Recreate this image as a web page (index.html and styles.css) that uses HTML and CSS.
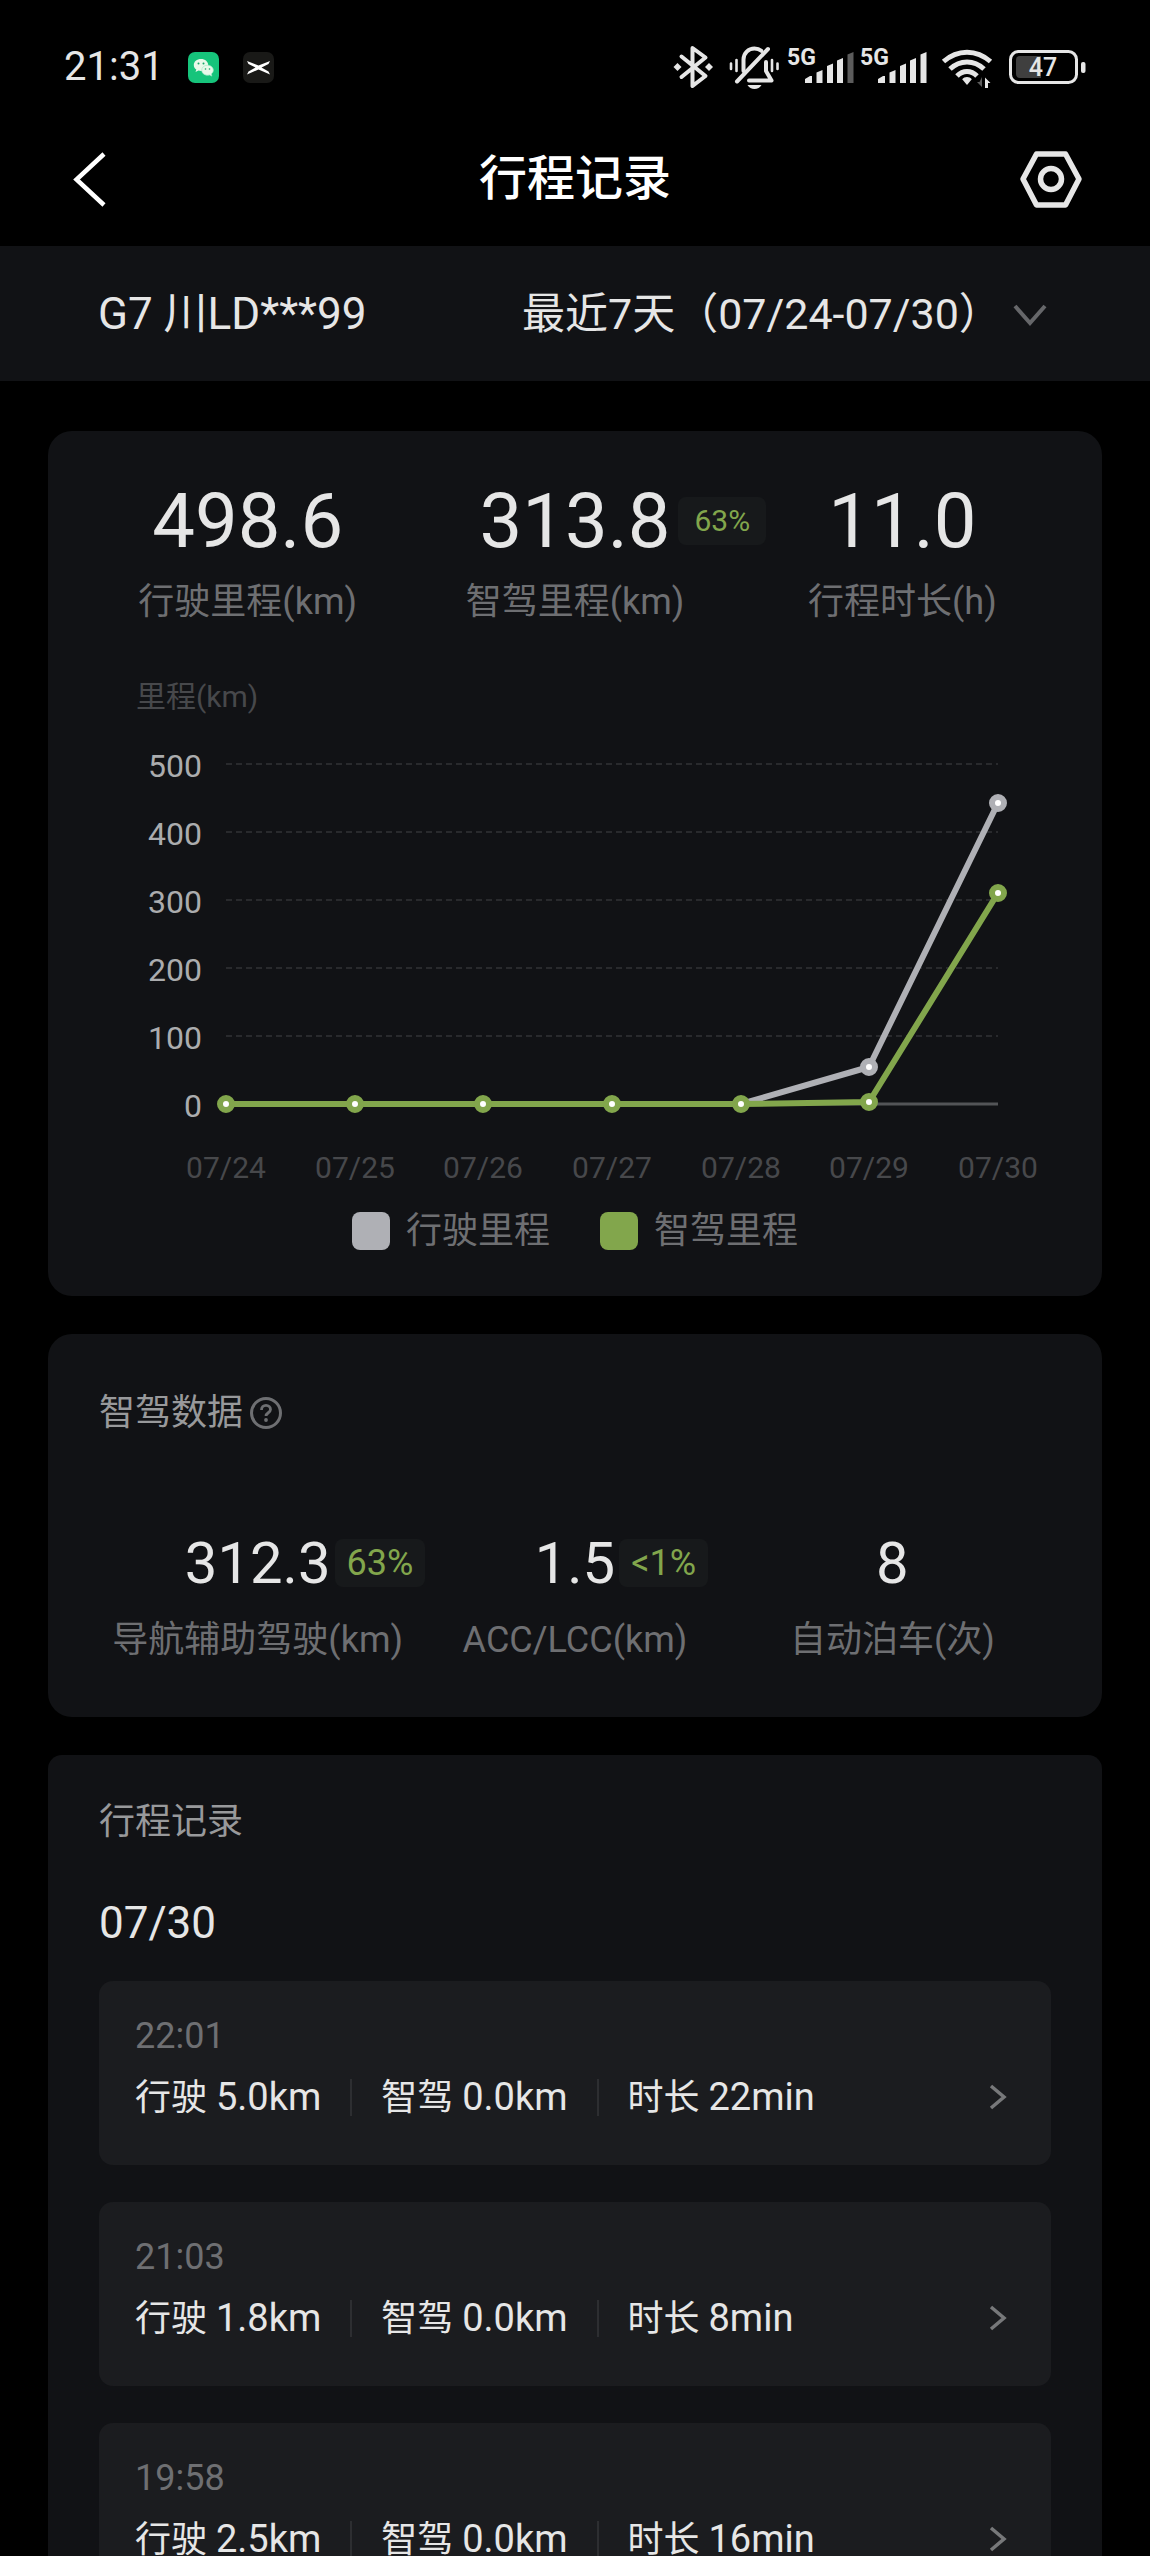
FILE: index.html
```html
<!DOCTYPE html>
<html lang="zh-CN">
<head>
<meta charset="utf-8">
<meta name="viewport" content="width=device-width, initial-scale=1">
<title>行程记录</title>
<link rel="stylesheet" href="styles.css">
</head>
<body>
<div class="app">
  <div class="status-bar">
    <div class="status-left">
      <time class="clock">21:31</time>
      <svg class="app-icon" viewBox="0 0 31 31" role="img" aria-label="微信">
        <rect width="31" height="31" rx="7" fill="#16c47b"/>
        <path d="M13 7c-4.200 0-7.200 2.600-7.200 6 0 2 1 3.500 2.500 4.600L7.500 20l3-1.400c.8.200 1.600.4 2.500.4 4.200 0 7.200-2.700 7.200-6S17.200 7 13 7z" fill="#e9f9ea"/>
        <path d="M19.500 13.200c-3.300 0-5.800 2.200-5.800 5s2.500 5 5.800 5c.7 0 1.400-.1 2-.3l2.300 1.200-.5-2.200c1.300-1 2-2.300 2-3.700 0-2.800-2.500-5-5.800-5z" fill="#e9f9ea" stroke="#a5e9c9" stroke-width=".7"/>
        <g fill="#16a868"><circle cx="10.500" cy="11.500" r="1"/><circle cx="15.500" cy="11.500" r="1"/><circle cx="17.500" cy="17" r=".8"/><circle cx="21.500" cy="17" r=".8"/></g>
      </svg>
      <svg class="app-icon" viewBox="0 0 31 31" role="img" aria-label="小鹏汽车">
        <rect width="31" height="31" rx="7" fill="#191917"/>
        <path d="M4 9l11.500 4.600L27 9l-1.500 3-7 3.500 7 4 1.500 3-11.500-5L4 22.500l1.500-3 7-4-7-3.500z" fill="#fff"/>
      </svg>
    </div>
    <div class="status-right">
      <svg width="56" height="48" viewBox="0 0 56 48" role="img" aria-label="蓝牙">
        <path d="M11.500 13.500L35.500 33 22.500 43V5l13 9.500L11.500 34" fill="none" stroke="#e6e6e6" stroke-width="4" stroke-linejoin="round" stroke-linecap="round"/>
        <path d="M7.500 20l4 4-4 4-4-4zM39 20l4 4-4 4-4-4z" fill="#e6e6e6"/>
      </svg>
      <svg width="60" height="48" viewBox="0 0 60 48" role="img" aria-label="静音振动">
        <g fill="none" stroke="#e6e6e6" stroke-linecap="round" stroke-linejoin="round">
          <path d="M17.500 28V16.500c0-6.500 5-11 11-11 2.600 0 5 .8 6.800 2.300" stroke-width="4"/>
          <path d="M40 19v9l5.500 9.500H23" stroke-width="4"/>
          <path d="M42 6L11 38.500" stroke-width="4"/>
          <path d="M5 20.500v5.500M10.500 17v11M46 17v11M51.500 20.500v5.500" stroke-width="2.600"/>
        </g>
        <path d="M21.500 42h14c-1.500 2.500-4 4-7 4s-5.500-1.500-7-4z" fill="#e6e6e6"/>
      </svg>
      <svg width="73" height="48" viewBox="0 0 73 48" role="img" aria-label="5G 信号四格">
        <text class="net-type" x="1" y="22">5G</text>
        <path d="M19 40v-4l5-3h2v7zM30.500 40V29.500l6-2.500v13zM41 40V23l6-2.500V40zM51 40V17.500l6-2.500v25z" fill="#e6e6e6"/>
        <path d="M61.500 40V11.500l6-2.500v31z" fill="#5c5c5c"/>
      </svg>
      <svg width="73" height="48" viewBox="0 0 73 48" role="img" aria-label="5G 信号满格">
        <text class="net-type" x="1" y="22">5G</text>
        <path d="M19 40v-4l5-3h2v7zM30.500 40V29.500l6-2.500v13zM41 40V23l6-2.500V40zM51 40V17.500l6-2.500v25zM61.500 40V11.500l6-2.500v31z" fill="#e6e6e6"/>
      </svg>
      <svg width="70" height="48" viewBox="0 0 70 48" role="img" aria-label="无线网络">
        <g fill="none" stroke="#e6e6e6" stroke-width="5">
          <path d="M11.500 18.500c14-12.500 33-12.500 47 0"/>
          <path d="M18 26c10-9.500 24-9.500 34 0"/>
          <path d="M25 33c6-6 14-6 20 0"/>
        </g>
        <path d="M35 34c2 0 3.600.8 4.800 2.200L35 42l-4.800-5.800C31.400 34.800 33 34 35 34z" fill="#e6e6e6"/>
        <path d="M50 34v10l-5-5h2.500" fill="#5c5c5c"/>
        <path d="M53 45V34.500l5.500 5.500H56v5z" fill="#e6e6e6"/>
      </svg>
      <svg width="88" height="48" viewBox="0 0 88 48" role="img" aria-label="电量">
        <rect x="8.500" y="8.500" width="66" height="31" rx="8" fill="none" stroke="#e6e6e6" stroke-width="3"/>
        <path d="M18 13h21v22H18a4 4 0 0 1-4-4V17a4 4 0 0 1 4-4z" fill="#3f3f3f"/>
        <rect x="79" y="19" width="4.500" height="11" rx="2" fill="#e6e6e6"/>
        <text class="battery-level" x="41" y="33" text-anchor="middle">47</text>
      </svg>
    </div>
  </div>

  <header class="nav-bar">
    <button class="icon-button" type="button" aria-label="返回">
      <svg width="64" height="64" viewBox="0 0 64 64"><path d="M37 7L9.500 32.500 37 58" fill="none" stroke="#fff" stroke-width="4.500"/></svg>
    </button>
    <h1 class="nav-title">行程记录</h1>
    <button class="icon-button" type="button" aria-label="设置">
      <svg width="64" height="64" viewBox="0 0 64 64"><g fill="none" stroke="#e6e6e6"><path d="M17.500 7h29L60 32 46.500 58h-29L4 32z" stroke-width="5.500" stroke-linejoin="round"/><circle cx="32" cy="32" r="10.500" stroke-width="5.500"/></g></svg>
    </button>
  </header>

  <div class="filter-bar">
    <span class="vehicle">G7 川LD***99</span>
    <label class="range">
      <select class="range-select" aria-label="时间范围">
        <option>最近7天（07/24-07/30）</option>
      </select>
      <svg class="range-arrow" width="36" height="28" viewBox="0 0 36 28"><path d="M3 4l15 17L33 4" fill="none" stroke="#66676a" stroke-width="4"/></svg>
    </label>
  </div>

  <main class="content">
    <section class="card summary">
      <dl class="stats stats-large">
        <div class="stat">
          <dd class="value"><span class="number">498.6</span></dd>
          <dt class="stat-label">行驶里程(km)</dt>
        </div>
        <div class="stat">
          <dd class="value"><span class="number">313.8<span class="badge">63%</span></span></dd>
          <dt class="stat-label">智驾里程(km)</dt>
        </div>
        <div class="stat">
          <dd class="value"><span class="number">11.0</span></dd>
          <dt class="stat-label">行程时长(h)</dt>
        </div>
      </dl>
      <p class="axis-title">里程(km)</p>
      <svg class="chart" viewBox="0 0 1054 480" role="img" aria-label="每日里程折线图">
        <path class="grid-line" d="M178 47h772M178 115h772M178 183h772M178 251h772M178 319h772"/>
        <path class="base-line" d="M178 387h772"/>
        <g class="y-labels">
          <text x="154" y="60">500</text>
          <text x="154" y="128">400</text>
          <text x="154" y="196">300</text>
          <text x="154" y="264">200</text>
          <text x="154" y="332">100</text>
          <text x="154" y="400">0</text>
        </g>
        <g class="x-labels">
          <text x="178" y="461">07/24</text>
          <text x="307" y="461">07/25</text>
          <text x="435" y="461">07/26</text>
          <text x="564" y="461">07/27</text>
          <text x="693" y="461">07/28</text>
          <text x="821" y="461">07/29</text>
          <text x="950" y="461">07/30</text>
        </g>
        <g class="series total">
          <path d="M178 387H693L821 350 950 86"/>
          <circle cx="821" cy="350" r="6"/><circle cx="950" cy="86" r="6"/>
        </g>
        <g class="series assisted">
          <path d="M178 387H693L821 385 950 176"/>
          <circle cx="178" cy="387" r="6"/><circle cx="307" cy="387" r="6"/><circle cx="435" cy="387" r="6"/><circle cx="564" cy="387" r="6"/><circle cx="693" cy="387" r="6"/><circle cx="821" cy="385" r="6"/><circle cx="950" cy="176" r="6"/>
        </g>
      </svg>
      <ul class="legend">
        <li class="legend-item"><span class="swatch swatch-total"></span>行驶里程</li>
        <li class="legend-item"><span class="swatch swatch-assisted"></span>智驾里程</li>
      </ul>
    </section>

    <section class="card assist">
      <h2 class="card-title">智驾数据
        <button class="help" type="button" aria-label="说明">
          <svg width="34" height="34" viewBox="0 0 34 34"><circle cx="17" cy="17" r="14.500" fill="none" stroke="#6e6f72" stroke-width="3"/><path d="M12.500 14c0-3 2-4.700 4.500-4.700s4.500 1.700 4.500 4.200c0 3.200-4.500 3.300-4.500 6.500" fill="none" stroke="#6e6f72" stroke-width="2.800"/><circle cx="17" cy="24" r="1.900" fill="#6e6f72"/></svg>
        </button>
      </h2>
      <dl class="stats stats-small">
        <div class="stat">
          <dd class="value"><span class="number">312.3<span class="badge">63%</span></span></dd>
          <dt class="stat-label">导航辅助驾驶(km)</dt>
        </div>
        <div class="stat">
          <dd class="value"><span class="number">1.5<span class="badge">&lt;1%</span></span></dd>
          <dt class="stat-label">ACC/LCC(km)</dt>
        </div>
        <div class="stat">
          <dd class="value"><span class="number">8</span></dd>
          <dt class="stat-label">自动泊车(次)</dt>
        </div>
      </dl>
    </section>

    <section class="card history">
      <h2 class="card-title">行程记录</h2>
      <h3 class="date">07/30</h3>
      <ul class="trips">
        <li><a class="trip" href="#trip-2201">
          <time class="trip-time">22:01</time>
          <span class="trip-row">
            <span class="trip-field">行驶 <span class="trip-value">5.0km</span></span><span class="trip-field">智驾 <span class="trip-value">0.0km</span></span><span class="trip-field">时长 <span class="trip-value">22min</span></span>
            <svg class="trip-arrow" width="20" height="28" viewBox="0 0 20 28"><path d="M3 3l13 11L3 25" fill="none" stroke="#77787a" stroke-width="3.500"/></svg>
          </span>
        </a></li>
        <li><a class="trip" href="#trip-2103">
          <time class="trip-time">21:03</time>
          <span class="trip-row">
            <span class="trip-field">行驶 <span class="trip-value">1.8km</span></span><span class="trip-field">智驾 <span class="trip-value">0.0km</span></span><span class="trip-field">时长 <span class="trip-value">8min</span></span>
            <svg class="trip-arrow" width="20" height="28" viewBox="0 0 20 28"><path d="M3 3l13 11L3 25" fill="none" stroke="#77787a" stroke-width="3.500"/></svg>
          </span>
        </a></li>
        <li><a class="trip" href="#trip-1958">
          <time class="trip-time">19:58</time>
          <span class="trip-row">
            <span class="trip-field">行驶 <span class="trip-value">2.5km</span></span><span class="trip-field">智驾 <span class="trip-value">0.0km</span></span><span class="trip-field">时长 <span class="trip-value">16min</span></span>
            <svg class="trip-arrow" width="20" height="28" viewBox="0 0 20 28"><path d="M3 3l13 11L3 25" fill="none" stroke="#77787a" stroke-width="3.500"/></svg>
          </span>
        </a></li>
      </ul>
    </section>
  </main>
</div>
</body>
</html>
```
FILE: styles.css
```css
:root {
  --text: #e6e6e6;
  --text-mid: #98999b;
  --text-dim: #6e6f72;
  --text-faint: #47484b;
  --green: #82a64c;
  --silver: #afb0b5;
  --card: #111215;
  --card-inner: #1b1c1f;
}

* {
  box-sizing: border-box;
}

body,
h1,
h2,
h3,
p,
dl,
dd,
ul {
  margin: 0;
  padding: 0;
}

ul {
  list-style: none;
}

body {
  background: #000;
  color: var(--text);
  font-family: Roboto, "Noto Sans CJK SC", sans-serif;
  font-size: 36px;
  line-height: 50px;
}

button {
  padding: 0;
  border: 0;
  background: none;
  font: inherit;
  color: inherit;
}

svg {
  display: block;
}

.app {
  display: flex;
  flex-direction: column;
  height: 100vh;
}

/* Phone status bar */
.status-bar {
  display: flex;
  flex: none;
  justify-content: space-between;
  align-items: center;
  padding: 22px 60px 0 64px;
  height: 112px;
}

.status-left {
  display: flex;
  align-items: center;
  gap: 24px;
}

.clock {
  font-size: 40px;
}

.app-icon {
  width: 31px;
  height: 31px;
}

.status-right {
  display: flex;
}

.net-type {
  fill: var(--text);
  font-size: 23px;
  font-weight: 700;
}

.battery-level {
  fill: var(--text);
  font-size: 25px;
  font-weight: 500;
}

/* Title bar */
.nav-bar {
  display: flex;
  flex: none;
  justify-content: space-between;
  align-items: center;
  padding: 0 67px;
  height: 134px;
}

.nav-title {
  font-size: 48px;
  font-weight: 500;
  line-height: 60px;
  color: #fff;
}

/* Vehicle and date range */
.filter-bar {
  display: flex;
  flex: none;
  justify-content: space-between;
  align-items: center;
  padding: 0 102px 0 98px;
  height: 135px;
  background: var(--card);
  font-size: 44px;
  line-height: 60px;
}

.range {
  position: relative;
  font-size: 43px;
}

.range-select {
  display: block;
  margin: 0;
  padding: 0 46px 0 0;
  border: 0;
  appearance: none;
  background: none;
  color: inherit;
  font: inherit;
}

.range-arrow {
  position: absolute;
  top: 18px;
  right: 0;
  pointer-events: none;
}

/* Scrolling content */
.content {
  display: flex;
  flex: 1;
  flex-direction: column;
  gap: 38px;
  min-height: 0;
  padding: 50px 48px;
  overflow-y: auto;
  scrollbar-width: none;
}

.card {
  flex: none;
  border-radius: 24px;
  background: var(--card);
}

.card-title {
  display: flex;
  align-items: center;
  gap: 6px;
  font-size: 36px;
  font-weight: 400;
  color: var(--text-mid);
}

/* Key figures */
.stats {
  display: grid;
  grid-template-columns: repeat(3, 1fr);
  text-align: center;
}

.stat {
  display: flex;
  flex-direction: column;
}

.number {
  position: relative;
}

.stat-label {
  color: var(--text-dim);
  white-space: nowrap;
}

.badge {
  position: absolute;
  top: 50%;
  left: 100%;
  margin-left: 8px;
  padding: 0 16px;
  border-radius: 8px;
  background: #17191b;
  color: var(--green);
  line-height: 48px;
  transform: translateY(-50%);
}

.stats-large {
  padding: 0 36px;
}

.stats-large .stat {
  gap: 16px;
}

.stats-large .value {
  font-size: 76px;
  line-height: 80px;
}

.stats-large .badge {
  font-size: 30px;
}

.stats-small .stat {
  gap: 22px;
}

.stats-small .value {
  font-size: 58px;
  line-height: 60px;
}

.stats-small .badge {
  margin-left: 4px;
  padding: 0 12px;
  font-size: 36px;
}

/* Mileage chart */
.summary {
  padding: 50px 0 40px;
}

.axis-title {
  margin: 50px 88px 0;
  font-size: 30px;
  line-height: 40px;
  color: var(--text-faint);
}

.chart {
  width: 100%;
  height: auto;
}

.grid-line {
  stroke: #292a2d;
  stroke-width: 2;
  stroke-dasharray: 6 4;
}

.base-line {
  stroke: #535457;
  stroke-width: 3;
}

.y-labels {
  fill: #abacae;
  font-size: 32px;
  text-anchor: end;
}

.x-labels {
  fill: var(--text-faint);
  font-size: 30px;
  text-anchor: middle;
}

.series path {
  fill: none;
  stroke-width: 6;
  stroke-linejoin: round;
}

.series circle {
  fill: #fff;
  stroke-width: 6;
}

.total {
  stroke: var(--silver);
}

.assisted {
  stroke: var(--green);
}

.legend {
  display: flex;
  justify-content: center;
  gap: 50px;
  margin-top: 9px;
  color: var(--text-dim);
}

.legend-item {
  display: flex;
  align-items: center;
  gap: 16px;
}

.swatch {
  width: 38px;
  height: 38px;
  border-radius: 8px;
}

.swatch-total {
  background: var(--silver);
}

.swatch-assisted {
  background: var(--green);
}

/* Assisted driving data */
.assist {
  padding: 54px 51px 52px;
}

.assist .stats {
  margin-top: 95px;
}

/* Trip list */
.history {
  padding: 42px 51px;
  border-radius: 14px;
}

.date {
  margin-top: 46px;
  font-size: 44px;
  font-weight: 400;
  line-height: 60px;
}

.trips {
  display: flex;
  flex-direction: column;
  gap: 37px;
  margin-top: 28px;
}

.trip {
  display: flex;
  flex-direction: column;
  gap: 11px;
  padding: 30px 43px 43px 36px;
  border-radius: 14px;
  background: var(--card-inner);
  color: inherit;
  text-decoration: none;
}

.trip-time {
  color: var(--text-dim);
}

.trip-row {
  display: flex;
  align-items: center;
  min-height: 50px;
  line-height: 36px;
}

.trip-field {
  white-space: nowrap;
}

.trip-value {
  font-size: 38px;
}

.trip-field + .trip-field {
  margin-left: 29px;
  padding-left: 29px;
  border-left: 2px solid #2d2e31;
}

.trip-arrow {
  margin-left: auto;
}
```
